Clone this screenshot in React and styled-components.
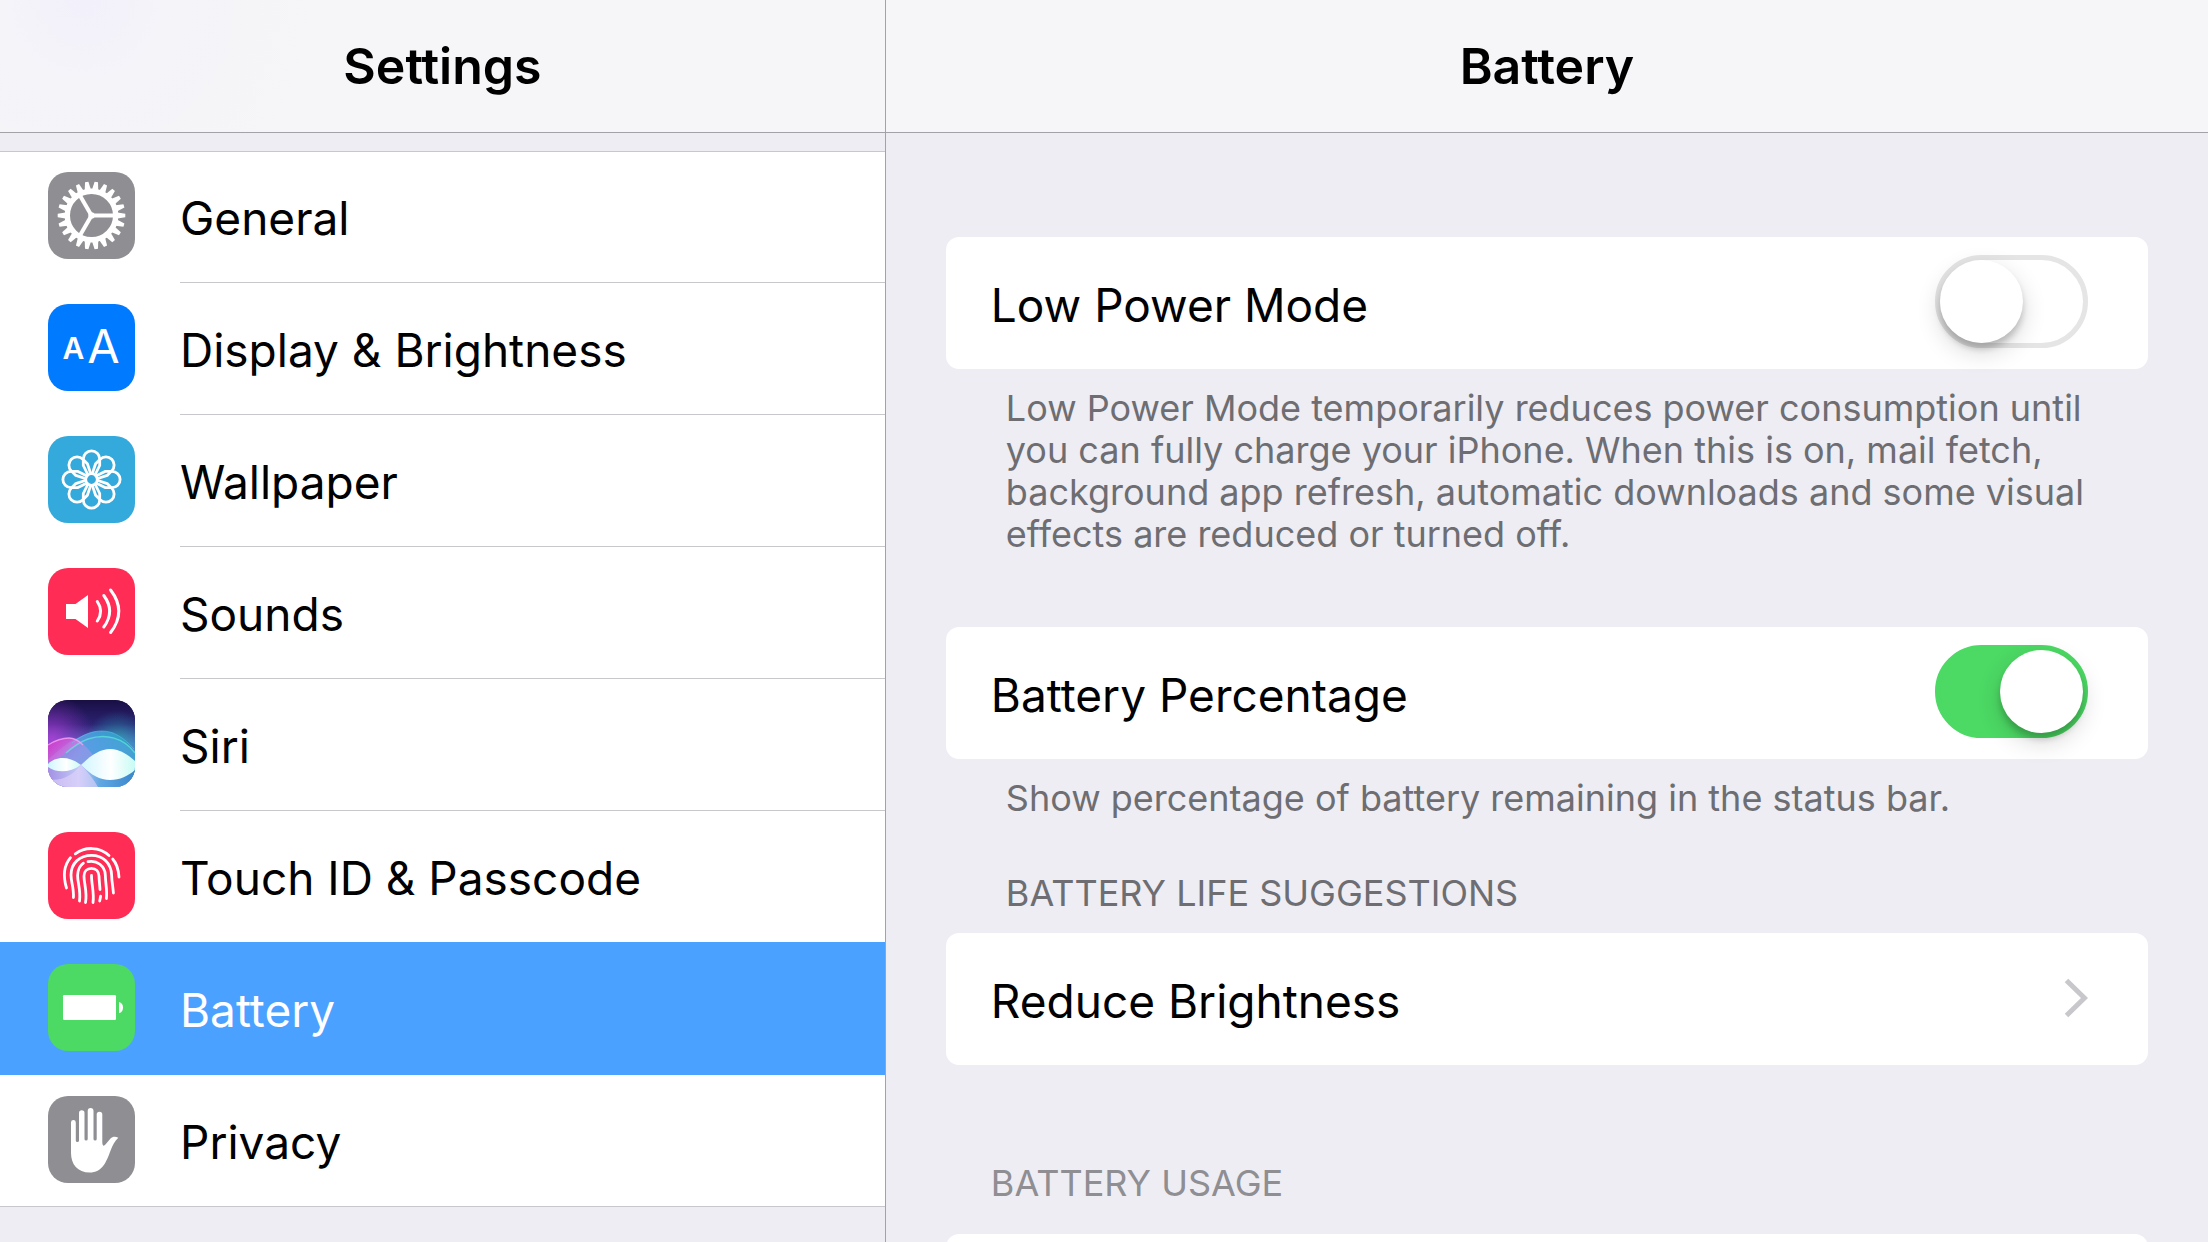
import React, { useState } from "react";
import styled, { createGlobalStyle, css } from "styled-components";

const font = `Inter, "Liberation Sans", sans-serif`;

const color = {
  page: "#eeedf4",
  bar: "#f6f6f8",
  barLine: "#a2a2a8",
  line: "#c8c7cc",
  selected: "#4ba1ff",
  note: "#6d6d72",
  muted: "#8e8e93",
  green: "#4cd964",
};

const GlobalStyle = createGlobalStyle`
  *, *::before, *::after { box-sizing: border-box; }
  body { margin: 0; background: ${color.page}; font-family: ${font}; color: #000; }
`;

const Split = styled.div`
  display: grid;
  grid-template-columns: 67fr 100fr;
  height: 100vh;
`;

const Pane = styled.div`
  display: flex;
  flex-direction: column;
  min-width: 0;
  min-height: 0;
  background: ${color.page};
  ${(p) => p.$divided && css`border-right: 1px solid ${color.barLine};`}
`;

const TitleBar = styled.header`
  flex: none;
  display: flex;
  align-items: center;
  justify-content: center;
  padding: 36px 24px;
  border-bottom: 1px solid ${color.barLine};
  background: ${(p) =>
    p.$tinted
      ? `radial-gradient(circle at 84px 0, #f2f0fb 0, #f4f4f9 80px, ${color.bar} 240px)`
      : color.bar};
`;

const Title = styled.h1`
  margin: 0;
  font-size: 50px;
  line-height: 60px;
  font-weight: 600;
`;

const Scroller = styled.div`
  flex: 1;
  min-height: 0;
  overflow-y: auto;
  scrollbar-width: none;
`;

const NavList = styled.ul`
  list-style: none;
  margin: 18px 0 0;
  padding: 0;
  background: #fff;
  box-shadow: inset 0 1px ${color.line}, inset 0 -1px ${color.line};
`;

const NavLink = styled.a`
  display: flex;
  gap: 45px;
  padding-left: 48px;
  color: ${(p) => (p.$selected ? "#fff" : "inherit")};
  background: ${(p) => (p.$selected ? color.selected : "transparent")};
  box-shadow: ${(p) => (p.$selected ? `0 -1px ${color.selected}` : "none")};
  text-decoration: none;
`;

const IconSlot = styled.span`
  flex: none;
  padding: 21px 0 24px;
`;

const Tile = styled.svg`
  display: block;
  width: 87px;
  height: 87px;
  border-radius: 20px;
  background: ${(p) => p.$bg};
`;

const rowText = css`
  font-size: 46px;
  line-height: 60px;
  padding-top: 37px;
  padding-bottom: 34px;
`;

const NavLabel = styled.span`
  ${rowText}
  flex: 1;
  border-bottom: 1px solid ${(p) => (p.$line ? color.line : "transparent")};
`;

const Content = styled.main`
  padding: 104px 60px 0;
`;

const Group = styled.section`
  margin-bottom: ${(p) => p.$gap}px;
`;

const Card = styled.div`
  border-radius: 13px;
  background: #fff;
`;

const rowBox = css`
  display: flex;
  align-items: center;
  justify-content: space-between;
  min-height: 132px;
  padding: 0 60px 0 45px;
`;

const SwitchRow = styled.label`
  ${rowBox}
`;

const LinkRow = styled.a`
  ${rowBox}
  color: inherit;
  text-decoration: none;
`;

const EmptyRow = styled.div`
  ${rowBox}
`;

const RowLabel = styled.span`
  ${rowText}
`;

const Trailing = styled.span`
  display: flex;
  padding-bottom: 3px;
`;

const Toggle = styled.input`
  appearance: none;
  margin: 0;
  width: 153px;
  height: 93px;
  border: 5px solid #e5e5e5;
  border-radius: 47px;
  background: #fff;
  display: flex;
  cursor: pointer;

  &::before {
    content: "";
    width: 83px;
    height: 83px;
    border-radius: 50%;
    background: #fff;
    box-shadow: 0 9px 24px rgba(0, 0, 0, 0.16), 0 6px 6px rgba(0, 0, 0, 0.18);
  }

  &:checked {
    justify-content: flex-end;
    border-color: ${color.green};
    background: ${color.green};
  }
`;

const noteText = css`
  margin: 0;
  font-weight: 400;
  font-size: 36px;
  line-height: 42px;
`;

const Note = styled.p`
  ${noteText}
  padding: 18px 60px 0;
  color: ${color.note};
`;

const GroupTitle = styled.h2`
  ${noteText}
  padding: ${(p) => (p.$muted ? "0 45px 30px" : "0 60px 19px")};
  color: ${(p) => (p.$muted ? color.muted : color.note)};
`;

const Chevron = styled.svg`
  display: block;
  width: 24px;
  height: 40px;
`;

const teeth = Array.from({ length: 22 }, (_, i) => (i * 360) / 22);
const petals = Array.from({ length: 8 }, (_, i) => i * 45);

const GearIcon = () => (
  <Tile $bg="#8e8e93" viewBox="0 0 87 87" aria-hidden="true">
    <g transform="translate(43.5 43.5)" fill="#fff">
      {teeth.map((a) => (
        <path key={a} d="M26-3.1L33.8-1.7V1.7L26 3.1z" transform={`rotate(${a})`} />
      ))}
      <circle r="24.2" fill="none" stroke="#fff" strokeWidth="5.4" />
      {[0, 120, 240].map((a) => (
        <path key={a} d="M0-2H24V2H0z" transform={`rotate(${a})`} />
      ))}
      <circle r="3.2" />
    </g>
  </Tile>
);

const DisplayIcon = () => (
  <Tile $bg="#007aff" viewBox="0 0 87 87" aria-hidden="true">
    <g fill="#fff" fontFamily={font} textAnchor="middle">
      <text x="25.5" y="55" fontSize="30" fontWeight="600">A</text>
      <text x="55.5" y="59" fontSize="47" fontWeight="400">A</text>
    </g>
  </Tile>
);

const WallpaperIcon = () => (
  <Tile $bg="#34aadc" viewBox="0 0 87 87" aria-hidden="true">
    <g transform="translate(43.5 43.5)" fill="none" stroke="#fff" strokeWidth="2.8">
      {petals.map((a) => (
        <path
          key={a}
          d="M-3.5-4.5L-8.2-14V-20.4A8.2 8.2 0 0 1 8.2-20.4V-14L3.5-4.5"
          strokeLinejoin="round"
          transform={`rotate(${a})`}
        />
      ))}
      <circle r="5.8" />
    </g>
  </Tile>
);

const SoundsIcon = () => (
  <Tile $bg="#ff2d55" viewBox="0 0 87 87" aria-hidden="true">
    <path d="M18 36H27.5L40 27V60L27.5 51H18z" fill="#fff" />
    <g fill="none" stroke="#fff" strokeWidth="3" strokeLinecap="round">
      <path d="M49.3 33.5Q56 43.3 49.3 53" />
      <path d="M55.8 27.5Q67.5 43.3 55.8 59" />
      <path d="M62.6 22Q79 43.3 62.6 64.5" />
    </g>
  </Tile>
);

const SiriIcon = () => (
  <Tile $bg="#1c1250" viewBox="0 0 87 87" aria-hidden="true">
    <defs>
      <linearGradient id="siriSky" x2="0" y2="1">
        <stop offset="0" stopColor="#190f44" />
        <stop offset=".28" stopColor="#2b2272" />
        <stop offset=".5" stopColor="#5a6ac4" />
        <stop offset="1" stopColor="#9db4ee" />
      </linearGradient>
      <radialGradient id="siriPurple" cx=".05" cy=".45" r=".5">
        <stop offset="0" stopColor="#b03fd8" stopOpacity=".85" />
        <stop offset="1" stopColor="#8a2fc0" stopOpacity="0" />
      </radialGradient>
      <radialGradient id="siriTeal" cx=".8" cy=".5" r=".38">
        <stop offset="0" stopColor="#25c4b8" stopOpacity=".7" />
        <stop offset="1" stopColor="#25a0b8" stopOpacity="0" />
      </radialGradient>
      <linearGradient id="siriPink" x2="1" y2=".5">
        <stop offset="0" stopColor="#dc2fc6" />
        <stop offset=".4" stopColor="#d58cec" />
        <stop offset="1" stopColor="#7fbcf2" />
      </linearGradient>
      <linearGradient id="siriBlue" x2="1" y2="0">
        <stop offset="0" stopColor="#8d98ea" />
        <stop offset=".55" stopColor="#45a4e0" />
        <stop offset="1" stopColor="#25a4bc" />
      </linearGradient>
      <linearGradient id="siriBase" x2="1" y2="0">
        <stop offset="0" stopColor="#a391e4" />
        <stop offset=".35" stopColor="#c3c8f8" />
        <stop offset=".6" stopColor="#5fa6e2" />
        <stop offset="1" stopColor="#3b86cc" />
      </linearGradient>
      <linearGradient id="siriLens" x2="1" y2="0">
        <stop offset="0" stopColor="#d0f6ff" />
        <stop offset=".55" stopColor="#fff" />
        <stop offset="1" stopColor="#c8fbf4" />
      </linearGradient>
    </defs>
    <rect width="87" height="87" fill="url(#siriSky)" />
    <rect width="87" height="87" fill="url(#siriPurple)" />
    <rect width="87" height="87" fill="url(#siriTeal)" />
    <path d="M22 42C36 34 44 31 54 31C68 31 78 40 87 52V87H0V60C8 52 16 46 22 42z" fill="url(#siriBlue)" opacity=".85" />
    <path d="M0 45C8 40 14 38 21 38C34 38 42 52 52 63C60 72 72 80 87 81V87H0z" fill="url(#siriPink)" opacity=".75" />
    <path d="M0 62C16 58 26 45 40 39C58 33 76 38 87 53V64H0z" fill="#5b9fe6" opacity=".5" />
    <path d="M0 66C12 70 24 70 33 65C44 78 60 84 87 68V87H0z" fill="url(#siriBase)" />
    <path d="M33 65C24 76 12 82 0 79V87H50C46 80 40 72 33 65z" fill="#e2d4fa" opacity=".6" />
    <path d="M18 53C26 46 32 42 40 39C58 33 76 38 87 53" fill="none" stroke="#5fe8dc" strokeWidth="1.4" opacity=".7" />
    <path d="M24 43C36 34 44 31 54 31C66 31 76 38 86 49" fill="none" stroke="#5fc8f4" strokeWidth="1" opacity=".5" />
    <path d="M0 45C8 40 14 38 21 38C27 38 31 41 35 45" fill="none" stroke="#f6a4f4" strokeWidth="1.4" opacity=".8" />
    <path d="M0 64C7 57 20 55 33 65C22 73 8 73 0 67z" fill="url(#siriLens)" />
    <path d="M33 65C44 54 53 49 62 49C72 49 80 55 87 61V70C80 76 72 80 62 80C52 80 43 75 33 65z" fill="url(#siriLens)" />
  </Tile>
);

const TouchIcon = () => (
  <Tile $bg="#ff2d55" viewBox="0 0 87 87" aria-hidden="true">
    <g fill="none" stroke="#fff" strokeWidth="2.8" strokeLinecap="round">
      <path d="M18.5 56C15 44.5 15.5 34 22.5 25.7" />
      <path d="M27.3 21.8C37 14.5 51.5 14.5 61 23.5" />
      <path d="M64.7 27C69 32 70.6 38 71 45" />
      <path d="M25.4 65.5C26 56 23 50 23 43C23 31 32 23.3 43.5 23.3C55 23.3 63.2 31 63.6 43C63.8 50 65 55 65.4 61" />
      <path d="M31.5 69C33 58 29.5 51 29.6 43.5C29.8 38 31.6 33.8 35.4 31.2" />
      <path d="M40 29.7C49 27.8 57 34 57.3 43C57.5 52 59.4 58 58.4 66.5" />
      <path d="M37.5 70.5C39.5 60 36 52 36 44C36 39.5 39 36.3 43.5 36.3C48 36.3 50.8 39.6 51 44C51.2 49 51.6 52 52 57.5" />
      <path d="M52.6 64.2L51.7 69" />
      <path d="M43.5 43.5C43.5 53 46.4 61 45 70.5" />
    </g>
  </Tile>
);

const BatteryIcon = () => (
  <Tile $bg={color.green} viewBox="0 0 87 87" aria-hidden="true">
    <rect x="15" y="31" width="53" height="25" rx="1.2" fill="#fff" />
    <path d="M71 38C73.7 38.6 75 40.8 75 43.5S73.7 48.6 71 49.2z" fill="#fff" />
  </Tile>
);

const PrivacyIcon = () => (
  <Tile $bg="#8e8e93" viewBox="0 0 87 87" aria-hidden="true">
    <path
      d="M23 26.5a2.4 2.4 0 0 1 4.8 0V44.5a1.6 1.6 0 0 0 3.2 0V17a2.75 2.75 0 0 1 5.5 0V43a1.6 1.6 0 0 0 3.2 0V15a2.9 2.9 0 0 1 5.8 0V43a1.6 1.6 0 0 0 3.2 0V18.6a2.8 2.8 0 0 1 5.6 0V46.5C54.4 49.6 55.6 50.6 57.4 48.6L62.5 42.5C64.6 40.5 67.6 40.4 70.3 41.8C66.6 45 64.6 49.6 62.6 54.5C58.4 65.8 54.4 76.5 41.6 76.5C29.6 76.5 23 68.4 23 57z"
      fill="#fff"
    />
  </Tile>
);

const items = [
  { name: "General", Icon: GearIcon },
  { name: "Display & Brightness", Icon: DisplayIcon },
  { name: "Wallpaper", Icon: WallpaperIcon },
  { name: "Sounds", Icon: SoundsIcon },
  { name: "Siri", Icon: SiriIcon },
  { name: "Touch ID & Passcode", Icon: TouchIcon },
  { name: "Battery", Icon: BatteryIcon },
  { name: "Privacy", Icon: PrivacyIcon },
];

const selectedName = "Battery";

function SwitchSetting({ id, label, initial }) {
  const [on, setOn] = useState(initial);
  return (
    <Card>
      <SwitchRow htmlFor={id}>
        <RowLabel>{label}</RowLabel>
        <Trailing>
          <Toggle
            id={id}
            type="checkbox"
            role="switch"
            checked={on}
            onChange={(e) => setOn(e.target.checked)}
          />
        </Trailing>
      </SwitchRow>
    </Card>
  );
}

export default function App() {
  return (
    <>
      <GlobalStyle />
      <Split>
        <Pane $divided>
          <TitleBar $tinted>
            <Title>Settings</Title>
          </TitleBar>
          <Scroller as="nav" aria-label="Settings">
            <NavList>
              {items.map(({ name, Icon }, i) => {
                const selected = name === selectedName;
                const next = items[i + 1];
                return (
                  <li key={name}>
                    <NavLink
                      href={`#${name.toLowerCase().replace(/\W+/g, "-")}`}
                      $selected={selected}
                      aria-current={selected ? "page" : undefined}
                    >
                      <IconSlot>
                        <Icon />
                      </IconSlot>
                      <NavLabel $line={!selected && next && next.name !== selectedName}>
                        {name}
                      </NavLabel>
                    </NavLink>
                  </li>
                );
              })}
            </NavList>
          </Scroller>
        </Pane>

        <Pane>
          <TitleBar>
            <Title as="h2">Battery</Title>
          </TitleBar>
          <Scroller>
            <Content>
              <Group $gap={72}>
                <SwitchSetting id="low-power" label="Low Power Mode" initial={false} />
                <Note>
                  Low Power Mode temporarily reduces power consumption until you can fully charge
                  your iPhone. When this is on, mail fetch, background app refresh, automatic
                  downloads and some visual effects are reduced or turned off.
                </Note>
              </Group>
              <Group $gap={53}>
                <SwitchSetting id="percentage" label="Battery Percentage" initial={true} />
                <Note>Show percentage of battery remaining in the status bar.</Note>
              </Group>
              <Group $gap={97}>
                <GroupTitle>BATTERY LIFE SUGGESTIONS</GroupTitle>
                <Card>
                  <LinkRow href="#brightness">
                    <RowLabel>Reduce Brightness</RowLabel>
                    <Trailing>
                      <Chevron viewBox="0 0 24 40" aria-hidden="true">
                        <path d="M2.5 2.5L20.5 20L2.5 37.5" fill="none" stroke="#c7c7cc" strokeWidth="5" />
                      </Chevron>
                    </Trailing>
                  </LinkRow>
                </Card>
              </Group>
              <Group $gap={0}>
                <GroupTitle $muted>BATTERY USAGE</GroupTitle>
                <Card>
                  <EmptyRow />
                </Card>
              </Group>
            </Content>
          </Scroller>
        </Pane>
      </Split>
    </>
  );
}
